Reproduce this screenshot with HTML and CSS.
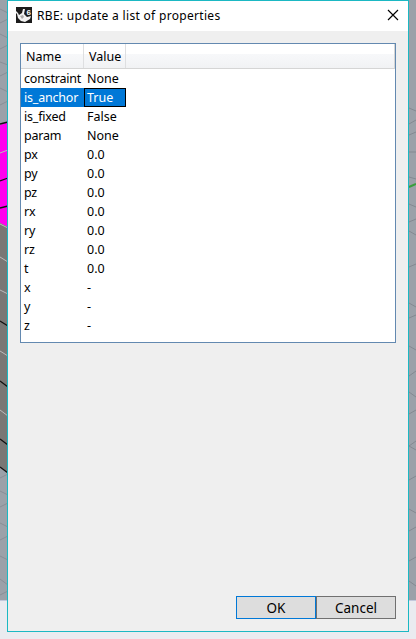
FILE: index.html
```html
<!DOCTYPE html>
<html lang="en">
<head>
<meta charset="utf-8">
<title>RBE: update a list of properties</title>
<link rel="stylesheet" href="styles.css">
</head>
<body>
<svg class="viewport" width="416" height="639" aria-hidden="true">
  <rect width="416" height="600" fill="#9ba1a9"/>
  <rect y="600" width="416" height="1" fill="#c3c8dc"/>
  <rect y="601" width="416" height="38" fill="#eaebf0"/>
  <path d="M0 9l8 4M0 23l8-4M0 34l8 4M0 49l8-4M0 62l8 3M0 76l8-4M0 88l8 4M0 105l8-4M0 478l8-4M0 491l8 4M0 507l8-4M0 523l8 4M0 540l8-4M0 556l8 4M0 579l8 6M0 595l8-4" stroke="#888e96" fill="none"/>
  <path d="M0 125l8-3v105l-8-4z" fill="#f0e"/>
  <path d="M0 223l8 4v246l-8-6z" fill="#797775"/>
  <path d="M0 124l8-2M0 181l8-3M0 208l8-2M0 321l8 5M0 381l8 6M0 439l8 6M0 467l8 6" stroke="#111" fill="none" stroke-width="1.300"/>
  <path d="M0 153l8-3M0 224l8 4M0 257l8 5M0 290l8 4M0 351l8 5M0 410l8 6" stroke="#bbb" fill="none"/>
  <path d="M409 108l7 3M409 124l7-4M409 135l7-3M409 152h7M409 177l7 2M409 204l7 3M409 222l7-3M409 231l7 4M409 267l7-3M409 303l7 4M409 318l7-3M409 346l7 4M409 376l7-5M409 392l7 5M409 414l7-4M409 446l7-5M409 446l7 4M409 480l7-4M409 509l7 4M409 531l7-4M409 561l7-4M409 581l7 5" stroke="#838991" fill="none"/>
  <path d="M409 187l7-3" stroke="#399f3c" stroke-width="2"/>
</svg>
<main class="dialog">
  <header class="titlebar">
    <svg class="logo" width="16" height="16" viewBox="0 0 16 16" aria-hidden="true">
      <path fill="#1c1c1c" d="M0 0h16v16H0z"/>
      <path fill="#f2f2f2" d="M0 4l2 2 1 2 3-2 1-4h2l-1 5 3 3 4-1-1 3-5 3-4-1-3-3-1-4-1-1z"/>
      <path fill="#aaa" d="M4 9l3-1 1 2-2 2z"/>
      <text class="badge" x="10.500" y="7.500">6</text>
    </svg>
    <h1 class="title">RBE: update a list of properties</h1>
    <svg class="close" width="12" height="12" viewBox="0 0 12 12" aria-label="Close"><path d="M1 1l10 10M11 1L1 11" stroke="#000" stroke-width="1.150"/></svg>
  </header>
  <section class="list">
    <div class="row head"><span class="name">Name</span><span class="value">Value</span></div>
    <div class="row"><span class="name">constraint</span><span class="value">None</span></div>
    <div class="row selected"><span class="name">is_anchor</span><span class="value">True</span></div>
    <div class="row"><span class="name">is_fixed</span><span class="value">False</span></div>
    <div class="row"><span class="name">param</span><span class="value">None</span></div>
    <div class="row"><span class="name">px</span><span class="value">0.0</span></div>
    <div class="row"><span class="name">py</span><span class="value">0.0</span></div>
    <div class="row"><span class="name">pz</span><span class="value">0.0</span></div>
    <div class="row"><span class="name">rx</span><span class="value">0.0</span></div>
    <div class="row"><span class="name">ry</span><span class="value">0.0</span></div>
    <div class="row"><span class="name">rz</span><span class="value">0.0</span></div>
    <div class="row"><span class="name">t</span><span class="value">0.0</span></div>
    <div class="row"><span class="name">x</span><span class="value">-</span></div>
    <div class="row"><span class="name">y</span><span class="value">-</span></div>
    <div class="row"><span class="name">z</span><span class="value">-</span></div>
  </section>
  <footer class="actions">
    <button class="button primary">OK</button><button class="button">Cancel</button>
  </footer>
</main>
</body>
</html>
```
FILE: styles.css
```css
* { box-sizing: border-box; }
body {
  margin: 0;
  width: 416px;
  height: 639px;
  overflow: hidden;
  background: #eaebf0;
  color: #000;
  font: 12.5px "Noto Sans", "Open Sans", sans-serif;
}
.viewport { position: absolute; top: 0; left: 0; z-index: -1; }
.dialog {
  display: flex;
  flex-direction: column;
  width: 402px;
  height: 632px;
  margin-left: 7px;
  border: 1px solid #1bb8c3;
  background: #efefef;
}
.titlebar {
  display: flex;
  align-items: center;
  height: 30px;
  padding: 0 9px 2px 8px;
  background: #fff;
}
.badge { fill: #fff; font: bold 8px "Liberation Sans", sans-serif; }
.title { margin: 0 auto 0 5px; font-size: 12px; font-weight: 400; letter-spacing: .31px; white-space: nowrap; }
.list {
  width: 376px;
  height: 300px;
  margin: 12px 0 0 12px;
  border: 1px solid #6389b0;
  background: #fff;
}
.row { display: flex; height: 19px; line-height: 19px; white-space: nowrap; }
.name { width: 63px; padding-left: 3px; letter-spacing: -.2px; }
.value { width: 42px; padding-left: 3px; }
.head {
  height: 25px;
  line-height: 26px;
  border-bottom: 1px solid #d5d5d5;
  border-right: 1px solid #d5d5d5;
  background: linear-gradient(#fff 0 10px, #f7f8fa 10px, #f1f2f4);
}
.head span { padding-left: 5px; border-right: 1px solid #dedfe1; letter-spacing: 0; }
.selected .name { background: #0078d7; color: #fff; }
.selected .value { background: #0078d7; color: #fff; border: 1px solid #000; padding-left: 2px; line-height: 17px; }
.actions { display: flex; margin: auto 12px 12px auto; }
.button {
  width: 80px;
  height: 23px;
  padding: 1px 0 0;
  border: 1px solid #707070;
  background: #ddd;
  color: #000;
  font: 13.5px/20px "Noto Sans", "Open Sans", sans-serif;
}
.primary { border-color: #0078d7; }
```
